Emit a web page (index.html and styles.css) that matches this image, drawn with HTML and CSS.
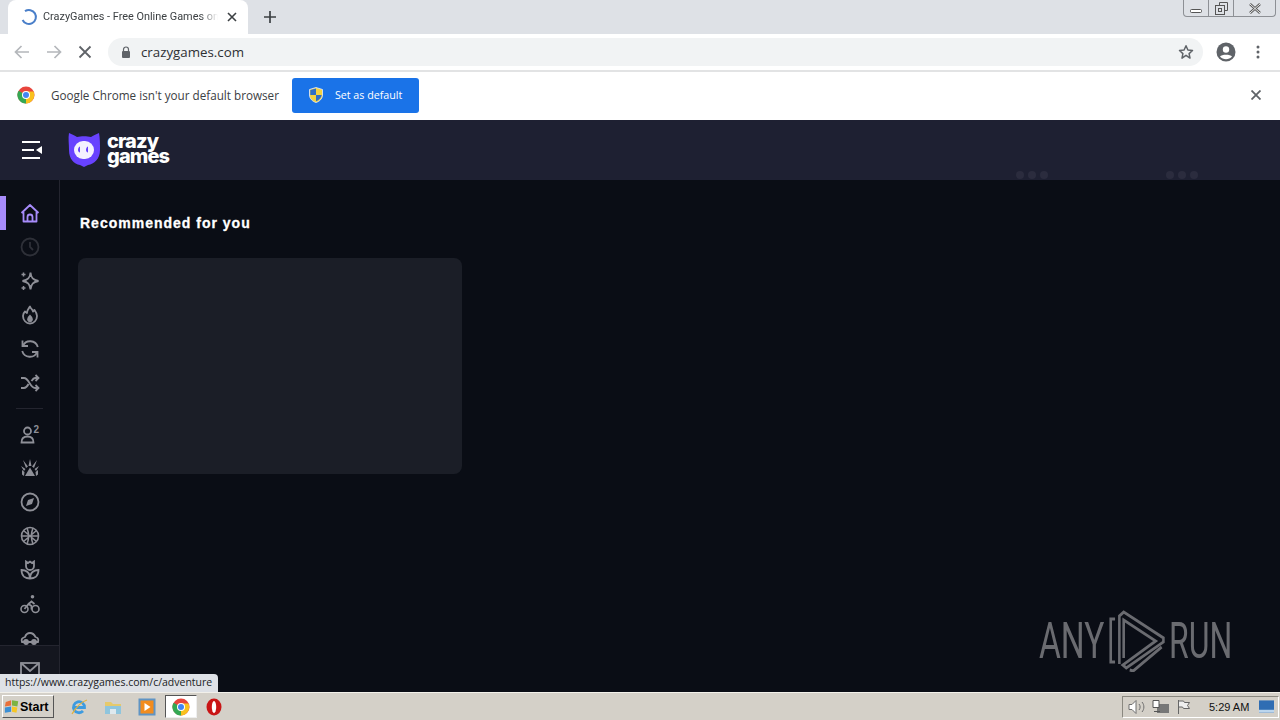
FILE: index.html
```html
<!DOCTYPE html>
<html lang="en">
<head>
<meta charset="utf-8">
<title>CrazyGames - Free Online Games on CrazyGames</title>
<link rel="stylesheet" href="styles.css">
</head>
<body>
<div class="tabstrip">
  <div class="tab">
    <svg class="spinner" width="18" height="18" viewBox="0 0 18 18"><path d="M5 3.200A7 7 0 1 1 2.600 12" fill="none" stroke="#4a7fc9" stroke-width="2"/></svg>
    <span class="tab-title">CrazyGames - Free Online Games on CrazyGames</span>
    <svg class="tab-close" width="10" height="10" viewBox="0 0 10 10"><path d="M1 1l8 8M9 1l-8 8" stroke="#3c4043" stroke-width="1.600"/></svg>
  </div>
  <svg class="newtab" width="12" height="12" viewBox="0 0 12 12"><path d="M6 0v12M0 6h12" stroke="#3c4043" stroke-width="1.700"/></svg>
  <div class="winctl">
    <div class="winbtn min"><svg width="12" height="4" viewBox="0 0 12 4"><rect x=".5" y=".5" width="11" height="3" rx="1" fill="#fff" stroke="#555"/></svg></div>
    <div class="winbtn"><svg width="13" height="13" viewBox="0 0 13 13"><path d="M4.500 3.500v-3h8v8h-3" fill="none" stroke="#555"/><rect x=".5" y="3.500" width="9" height="9" fill="none" stroke="#555"/><rect x="3.500" y="6.500" width="3" height="3" fill="none" stroke="#555"/></svg></div>
    <div class="winbtn close"><svg width="12" height="11" viewBox="0 0 12 11"><path d="M1 1l10 9M11 1L1 10" stroke="#555" stroke-width="2.400"/><path d="M1 1l10 9M11 1L1 10" stroke="#eee" stroke-width="1"/></svg></div>
  </div>
</div>

<div class="toolbar">
  <svg class="navicon" width="16" height="14" viewBox="0 0 16 14"><path d="M15 7H2M7.500 1L1.500 7l6 6" fill="none" stroke="#b4b7bb" stroke-width="1.700"/></svg>
  <svg class="navicon" width="16" height="14" viewBox="0 0 16 14"><path d="M1 7h13M8.500 1l6 6-6 6" fill="none" stroke="#b4b7bb" stroke-width="1.700"/></svg>
  <svg class="navicon stop" width="14" height="14" viewBox="0 0 14 14"><path d="M1.500 1.500l11 11M12.500 1.500l-11 11" stroke="#5f6368" stroke-width="1.800"/></svg>
  <div class="omnibox">
    <svg width="10" height="12" viewBox="0 0 10 12"><path d="M2.500 5V3.500a2.500 2.500 0 0 1 5 0V5" fill="none" stroke="#5f6368" stroke-width="1.200"/><rect x="1" y="5" width="8" height="7" rx="1" fill="#5f6368"/></svg>
    <span class="url">crazygames.com</span>
    <svg class="star" width="16" height="16" viewBox="0 0 16 16"><path d="M8 1.800l1.900 4.200 4.600.5-3.400 3.100.9 4.500L8 11.300l-4 2.800.9-4.500L1.500 6.500l4.600-.5z" fill="none" stroke="#5f6368" stroke-width="1.500" stroke-linejoin="round"/></svg>
  </div>
  <svg class="avatar" width="20" height="20" viewBox="0 0 20 20"><circle cx="10" cy="10" r="9.500" fill="#5f6368"/><circle cx="10" cy="7.500" r="3.200" fill="#fff"/><path d="M4 14.500c1.500-2.500 10.500-2.500 12 0-3 3.500-9 3.500-12 0z" fill="#fff"/></svg>
  <svg class="menu" width="4" height="14" viewBox="0 0 4 14"><circle cx="2" cy="2" r="1.500" fill="#5f6368"/><circle cx="2" cy="7" r="1.500" fill="#5f6368"/><circle cx="2" cy="12" r="1.500" fill="#5f6368"/></svg>
</div>

<div class="infobar">
  <svg class="chrome" width="18" height="18" viewBox="0 0 18 18"><circle cx="9" cy="9" r="8.500" fill="#e8453c"/><path d="M9 9L1.600 4.700A8.500 8.500 0 0 0 9 17.500z" fill="#34a853"/><path d="M9 5.500h7.500A8.500 8.500 0 0 1 9 17.500L9 9z" fill="#f9c11e"/><circle cx="9" cy="9" r="4" fill="#fff"/><circle cx="9" cy="9" r="3" fill="#4285f4"/></svg>
  <span class="info-text">Google Chrome isn't your default browser</span>
  <div class="default-btn">
    <svg width="14" height="16" viewBox="0 0 14 16"><path d="M7 .5l6.500 2v5.500c0 3.500-3 6.500-6.500 7.500C3.500 14.500.5 11.500.5 8V2.500z" fill="#f4d33f" stroke="#e8eefc" stroke-width=".8"/><path d="M7 1.500v6.500H1.300V3zM7 8h5.700c-.3 2.800-2.700 5.200-5.700 6.300z" fill="#2f6fc4"/></svg>
    <span>Set as default</span>
  </div>
  <svg class="info-close" width="10" height="10" viewBox="0 0 10 10"><path d="M.5.500l9 9M9.500.500l-9 9" stroke="#5f6368" stroke-width="1.800"/></svg>
</div>

<header class="sitehead">
  <svg class="burger" width="21" height="20" viewBox="0 0 21 20"><path d="M1 2h18M1 10h12M1 18h18" stroke="#fff" stroke-width="2"/><path d="M21 6v8l-6-4z" fill="#fff"/></svg>
  <svg class="owl" width="32" height="36" viewBox="0 0 32 36"><path d="M1 1c3 1 6 3 8 4 4-1 10-1 14 0 2-1 5-3 8-4 1 5 1 12 1 17 0 9-6 14-12 15l-4 2-4-2C6 32 1 27 1 18 1 12 0 6 1 1z" fill="#6842ff"/><rect x="6" y="9" width="20" height="18" rx="9" fill="#f4f1ff"/><path d="M12 14.500c-1.500.5-2 2-2 3.500s1 2.500 2 2.500v-6zM20 14.500c-1.500.5-2 2-2 3.500s1 2.500 2 2.500v-6z" fill="#6842ff"/></svg>
  <div class="wordmark"><span>crazy</span><span>games</span></div>
  <div class="ghost-dots one"><i></i><i></i><i></i></div>
  <div class="ghost-dots two"><i></i><i></i><i></i></div>
</header>

<div class="body-row">
  <nav class="rail">
    <div class="rail-scroll">
      <div class="rail-item active">
        <svg width="20" height="20" viewBox="0 0 20 20" fill="none" stroke="#a78bfa" stroke-width="1.800" stroke-linejoin="round"><path d="M1.500 10L10 2l8.500 8M3.500 8v10.500h13V8M7.500 18.500V14a2.500 2.500 0 0 1 5 0v4.500"/></svg>
      </div>
      <div class="rail-item dim">
        <svg width="20" height="20" viewBox="0 0 20 20" fill="none" stroke="#2e3038" stroke-width="1.800"><circle cx="10" cy="10" r="8.500"/><path d="M10 5v5l3 3"/></svg>
      </div>
      <div class="rail-item">
        <svg width="20" height="20" viewBox="0 0 20 20" fill="none" stroke="#8e8f97" stroke-width="1.800"><path d="M10.500 1.500c.6 5.500 2.500 7.500 8 8.500-5.500 1-7.400 3-8 8.500-.6-5.500-2.500-7.500-8-8.500 5.500-1 7.400-3 8-8.500z"/><path d="M3.500 1.500v4M1.500 3.500h4M3.500 15v4M1.500 17h4" stroke-width="1.500"/></svg>
      </div>
      <div class="rail-item">
        <svg width="20" height="20" viewBox="0 0 20 20" fill="none" stroke="#8e8f97" stroke-width="1.800" stroke-linejoin="round"><path d="M10 1.500c1 3 2.500 2.500 3 5l1.500-1.500c1.500 2 2.500 4 2.500 6 0 4-3 7.500-7 7.500s-7-3.500-7-7.500c0-2 1-3.500 2-4.500l2 1.500c0-3 2-5 3-6.500z"/><path d="M10 9.500c1.500 1.500 2.800 3 2.800 4.700a2.800 2.800 0 0 1-5.600 0c0-1.700 1.300-3.200 2.800-4.700z" fill="#8e8f97" stroke="none"/></svg>
      </div>
      <div class="rail-item">
        <svg width="20" height="20" viewBox="0 0 20 20" fill="none" stroke="#8e8f97" stroke-width="1.800"><path d="M2.500 1.500V7h5.500"/><path d="M2.800 7A8 8 0 0 1 17.800 8"/><path d="M17.500 18.500V13H12"/><path d="M17.200 13A8 8 0 0 1 2.200 12"/></svg>
      </div>
      <div class="rail-item">
        <svg width="20" height="20" viewBox="0 0 20 20" fill="none" stroke="#8e8f97" stroke-width="1.800"><path d="M1 5h3c5 0 6 10 11 10h3M1 15h3c2 0 3.500-2 4.500-4M11.500 8c1-1.500 2-3 3.500-3h3"/><path d="M15.500 2l3 3-3 3M15.500 12l3 3-3 3"/></svg>
      </div>
      <div class="rail-sep"></div>
      <div class="rail-item">
        <svg width="20" height="20" viewBox="0 0 20 20" fill="none" stroke="#8e8f97" stroke-width="1.800"><circle cx="7.500" cy="7" r="3.500"/><path d="M1.500 18.500c0-4 2-6 6-6s6 2 6 6z"/><text class="sup" x="13.500" y="8.500">2</text></svg>
      </div>
      <div class="rail-item">
        <svg width="20" height="20" viewBox="0 0 20 20" fill="#8e8f97"><path d="M10 1l1.500 7h-3zM3 2l5 6.500L6 10zM17 2l-5 6.500 2 1.500zM1 8l4.500 3L4 13zM19 8l-4.500 3L16 13zM10 9.500l5 8.500H5zM2 12l2.500 2L4 18l-2-1.500zM18 12l-2.500 2 .5 4 2-1.500z"/></svg>
      </div>
      <div class="rail-item">
        <svg width="20" height="20" viewBox="0 0 20 20" fill="none" stroke="#8e8f97" stroke-width="1.800"><circle cx="10" cy="10" r="8.500"/><path d="M14 6l-2 6-6 2 2-6z" fill="#8e8f97" stroke="none"/></svg>
      </div>
      <div class="rail-item">
        <svg width="20" height="20" viewBox="0 0 20 20" fill="none" stroke="#8e8f97" stroke-width="1.600"><circle cx="10" cy="10" r="8.500"/><path d="M3.500 4.500l13 11M16.500 4.500l-13 11M1.500 10h17M7 2c2 5 2 11 0 16M13 2c-2 5-2 11 0 16"/></svg>
      </div>
      <div class="rail-item">
        <svg width="20" height="20" viewBox="0 0 20 20" fill="none" stroke="#8e8f97" stroke-width="1.800"><path d="M6 1.500l2 1.500 2-1.500 2 1.500 2-1.500V6a4 4 0 0 1-8 0z"/><path d="M1.500 10c4 0 8.500 2 8.500 8.500-4 0-8.500-2-8.500-8.500zM18.500 10c-4 0-8.500 2-8.500 8.500 4 0 8.500-2 8.500-8.500z"/></svg>
      </div>
      <div class="rail-item">
        <svg width="20" height="20" viewBox="0 0 20 20" fill="none" stroke="#8e8f97" stroke-width="1.600"><circle cx="4.500" cy="15" r="3.500"/><circle cx="15.500" cy="15" r="3.500"/><path d="M4.500 15l4-5 3 2v3.500M8.500 10l3-2.500 3 2.500" stroke-width="1.800"/><circle cx="12.500" cy="2.800" r="1.800" fill="#8e8f97" stroke="none"/></svg>
      </div>
      <div class="rail-item">
        <svg width="20" height="20" viewBox="0 0 20 20" fill="none" stroke="#8e8f97" stroke-width="1.800"><path d="M2 14c-1-3 0-4 3-5 1-3 3-4 5-4 3 0 4 1 5.500 4 2 .5 3.500 2 2.500 5z"/><circle cx="6" cy="14" r="2"/><circle cx="14" cy="14" r="2"/></svg>
      </div>
    </div>
    <div class="rail-foot">
      <svg width="20" height="16" viewBox="0 0 20 16" fill="none" stroke="#8e8f97" stroke-width="1.800"><rect x="1" y="1" width="18" height="14"/><path d="M1 1l9 8 9-8"/></svg>
    </div>
  </nav>
  <main class="content">
    <h2 class="section-title">Recommended for you</h2>
    <div class="skeleton"></div>
  </main>
  <div class="status">https://www.crazygames.com/c/adventure</div>
  <div class="anyrun">
    <span class="wm-any">ANY</span>
    <svg width="57" height="62" viewBox="0 0 66 62" fill="none" stroke="#6a6b70" stroke-width="3" preserveAspectRatio="none"><path d="M7 9H2v43h5"/><path d="M12 54V6l5-4 46 26v4L20 58l-4-3 38-24L17 10v38"/><path d="M24 60l4 1 33-24"/></svg>
    <span class="wm-run">RUN</span>
  </div>
</div>

<footer class="taskbar">
  <div class="start">
    <svg width="16" height="15" viewBox="0 0 18 16"><path d="M2 3l6-2v6l-7 1z" fill="#e8703a"/><path d="M9 1l7 1-1 6-6-1z" fill="#7cb342"/><path d="M1 9l7-1v6l-7 1z" fill="#3b8fd4"/><path d="M9 8l6 1-1 6-5-1z" fill="#f6c624"/></svg>
    <span>Start</span>
  </div>
  <div class="quick">
    <svg width="18" height="18" viewBox="0 0 18 18"><path d="M3.500 9.500h11A5.500 5.500 0 1 0 13 13" fill="none" stroke="#3d9be0" stroke-width="2.800"/><path d="M2 16C5 11 11 4 17 2" fill="none" stroke="#e3b23c" stroke-width="1.300"/></svg>
    <svg width="18" height="16" viewBox="0 0 18 16"><path d="M1 3h6l2 2h8v10H1z" fill="#e6c96b"/><rect x="1" y="7" width="16" height="8" fill="#8fc5dd"/><rect x="6" y="10" width="6" height="5" fill="#dfe9ee"/></svg>
    <svg width="18" height="18" viewBox="0 0 18 18"><rect x="1.500" y="1.500" width="15" height="15" fill="#f28c1e" stroke="#5f94c4" stroke-width="2"/><path d="M6.500 5l6 4-6 4z" fill="#fff"/></svg>
    <div class="task-active"><svg width="18" height="18" viewBox="0 0 18 18"><circle cx="9" cy="9" r="8.500" fill="#e8453c"/><path d="M9 9L1.600 4.700A8.500 8.500 0 0 0 9 17.500z" fill="#34a853"/><path d="M9 5.500h7.500A8.500 8.500 0 0 1 9 17.500L9 9z" fill="#f9c11e"/><circle cx="9" cy="9" r="4" fill="#fff"/><circle cx="9" cy="9" r="3" fill="#4285f4"/></svg></div>
    <svg width="16" height="18" viewBox="0 0 16 18"><ellipse cx="8" cy="9" rx="7.500" ry="8.500" fill="#c91515"/><ellipse cx="8" cy="9" rx="2.200" ry="6" fill="#fff"/></svg>
  </div>
  <div class="tray">
    <svg width="18" height="16" viewBox="0 0 18 16" fill="none" stroke="#6f6f6f"><path d="M1 5.500h3l4-4v13l-4-4H1z" fill="#fff"/><path d="M11 5c1.500 2 1.500 4 0 6M14 3c2.500 3 2.500 7 0 10"/></svg>
    <svg width="18" height="16" viewBox="0 0 18 16"><rect x="5" y="5" width="12" height="9" fill="#777"/><path d="M1 1.500h6v7H1z" fill="#fff" stroke="#555"/><path d="M2 12.500h6" stroke="#555"/></svg>
    <svg width="16" height="16" viewBox="0 0 16 16" fill="#eee" stroke="#666"><path d="M2.500 1v14"/><path d="M2.500 2h5l1 1.500h5l-2 3 2 3h-6l-1-1.500h-4z"/></svg>
    <span class="clock">5:29 AM</span>
    <svg width="15" height="13" viewBox="0 0 16 13"><rect width="16" height="13" fill="#2f6db3"/><rect y="10" width="16" height="3" fill="#bcd6ee"/></svg>
  </div>
</footer>
</body>
</html>
```
FILE: styles.css
```css
* { box-sizing: border-box; margin: 0; padding: 0; }
html, body { height: 100%; overflow: hidden; }
body {
  display: flex;
  flex-direction: column;
  width: 1280px;
  height: 720px;
  font-family: "Open Sans", "Noto Sans", sans-serif;
  background: #0a0d15;
}
svg { display: block; flex: none; }

.tabstrip {
  flex: none;
  height: 34px;
  background: #dee1e6;
  display: flex;
  align-items: flex-start;
  padding-left: 8px;
}
.tab {
  width: 240px;
  height: 34px;
  background: #fff;
  border-radius: 8px 8px 0 0;
  display: flex;
  align-items: center;
  padding: 0 11px 1px 12px;
}
.tab-title {
  width: 175px;
  margin-left: 5px;
  font-family: "Roboto", sans-serif;
  font-size: 10.900px;
  color: #3c4043;
  white-space: nowrap;
  overflow: hidden;
  -webkit-mask-image: linear-gradient(to right, #000 90%, transparent);
  mask-image: linear-gradient(to right, #000 90%, transparent);
}
.tab-close { margin-left: 9px; }
.newtab { margin: 11px 0 0 16px; }
.winctl {
  margin-left: auto;
  margin-right: 4px;
  display: flex;
  height: 17px;
  border: 1px solid #8d9095;
  border-top: none;
  border-radius: 0 0 4px 4px;
  width: 93px;
}
.winbtn {
  flex: 1;
  display: flex;
  align-items: center;
  justify-content: center;
  border-right: 1px solid #8d9095;
}
.winbtn.min { align-items: flex-end; padding-bottom: 3px; }
.winbtn.close { flex: 1.700; border-right: none; }

.toolbar {
  flex: none;
  height: 38px;
  background: #fff;
  border-bottom: 2px solid #e2e3e4;
  display: flex;
  align-items: center;
  padding: 0 0 1px 14px;
}
.navicon { margin-right: 16px; }
.stop { margin: 0 16px 0 0; }
.omnibox {
  width: 1095px;
  height: 28px;
  background: #f1f3f4;
  border-radius: 14px;
  display: flex;
  align-items: center;
  padding: 0 9px 0 13px;
}
.url { margin-left: 10px; font-size: 13.300px; color: #2e3033; }
.star { margin-left: auto; }
.avatar { margin-left: 13px; }
.menu { margin-left: 20px; }

.infobar {
  flex: none;
  height: 48px;
  background: #fff;
  display: flex;
  align-items: center;
  padding: 0 19px 2px 17px;
}
.info-text { margin-left: 16px; font-size: 11.700px; color: #3c4043; white-space: nowrap; }
.default-btn {
  margin-left: 13px;
  width: 127px;
  height: 35px;
  background: #1a73e8;
  border-radius: 3px;
  display: flex;
  align-items: center;
  padding-left: 17px;
  color: #fff;
  font-size: 10.700px;
}
.default-btn span { margin-left: 12px; }
.info-close { margin-left: auto; }

.sitehead {
  flex: none;
  position: relative;
  height: 60px;
  background: #1e2032;
  display: flex;
  align-items: center;
  padding-left: 21px;
}
.owl { margin-left: 26px; }
.wordmark {
  margin: 0 0 3px 7px;
  display: flex;
  flex-direction: column;
  font-family: "Inter", sans-serif;
  font-weight: 800;
  color: #fff;
  font-size: 20px;
  line-height: 15px;
  letter-spacing: -0.900px;
}
.ghost-dots { position: absolute; top: 51px; display: flex; gap: 4px; }
.ghost-dots.one { left: 1016px; }
.ghost-dots.two { left: 1166px; }
.ghost-dots i { width: 8px; height: 8px; border-radius: 50%; background: #2b2c3e; }

.body-row {
  flex: 1;
  position: relative;
  display: flex;
  min-height: 0;
  background: #0a0d15;
}
.rail {
  width: 60px;
  flex: none;
  border-right: 1px solid #24252f;
  display: flex;
  flex-direction: column;
  background: #0b0e16;
}
.rail-scroll {
  flex: 1;
  min-height: 0;
  overflow: hidden;
  padding-top: 16px;
}
.rail-item {
  height: 34px;
  display: flex;
  align-items: center;
  justify-content: center;
}
.rail-item.active { box-shadow: inset 6px 0 0 #a78bfa; }
.rail-sep { height: 1px; margin: 8px 16px 8px; background: #24252f; }
.sup { font-family: "Liberation Sans", sans-serif; font-size: 10px; font-weight: 700; fill: #8e8f97; stroke: none; }
.rail-foot {
  flex: none;
  height: 47px;
  background: #14161f;
  border-top: 1px solid #24252f;
  display: flex;
  justify-content: center;
  padding-top: 16px;
}
.content { flex: 1; padding: 34px 0 0 18px; }
.section-title {
  margin-left: 2px;
  font-family: "Liberation Sans", sans-serif;
  font-size: 14px;
  line-height: 18px;
  font-weight: 700;
  letter-spacing: 1px;
  color: #fff;
  -webkit-text-stroke: 0.300px #fff;
}
.skeleton {
  margin-top: 26px;
  width: 384px;
  height: 216px;
  background: #1b1e27;
  border-radius: 8px;
}
.status {
  position: absolute;
  left: 0;
  bottom: 0;
  width: 218px;
  height: 18px;
  padding: 0 5px;
  background: #dee1e6;
  border-radius: 0 4px 0 0;
  font-size: 10.500px;
  line-height: 17px;
  color: #202124;
  white-space: nowrap;
}
.anyrun {
  position: absolute;
  left: 1039px;
  top: 430px;
  display: flex;
  align-items: center;
  font-family: "Roboto", sans-serif;
  font-size: 50px;
  color: #6a6b70;
}
.anyrun svg { margin: 0 3px 0 8px; }
.wm-any, .wm-run { display: block; transform-origin: left center; white-space: nowrap; }
.wm-any { width: 62px; transform: scaleX(0.67); }
.wm-run { width: 61px; transform: scaleX(0.64); }

.taskbar {
  flex: none;
  height: 28px;
  background: #d4d0c8;
  border-top: 1px solid #f2f0ea;
  display: flex;
  align-items: center;
  padding-left: 2px;
}
.start {
  width: 52px;
  height: 23px;
  display: flex;
  align-items: center;
  gap: 0;
  padding-left: 1px;
  background: #d4d0c8;
  border: 1px solid;
  border-color: #fff #555 #555 #fff;
  font-family: "Liberation Sans", sans-serif;
  font-weight: 700;
  font-size: 12.500px;
  color: #000;
}
.quick { display: flex; align-items: center; gap: 16px; margin-left: 16px; }
.task-active {
  width: 32px;
  height: 23px;
  margin: 0 -7px 0 -7px;
  display: flex;
  align-items: center;
  justify-content: center;
  background: #fff;
  border: 1px solid;
  border-color: #555 #eee #eee #555;
}
.tray {
  margin-left: auto;
  width: 157px;
  height: 22px;
  margin-right: 1px;
  display: flex;
  align-items: center;
  padding-left: 5px;
  gap: 6px;
  border: 1px solid;
  border-color: #8a8880 #fff #fff #8a8880;
}
.clock { margin-left: 11px; font-size: 11px; color: #111; white-space: nowrap; font-family: "Liberation Sans", sans-serif; margin-right: 4px; }
```
